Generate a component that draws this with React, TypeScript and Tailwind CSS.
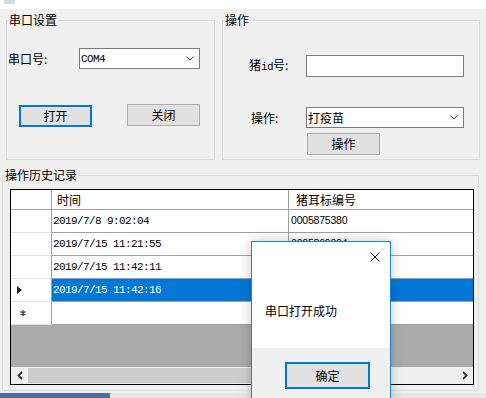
const cjk = "font-['Noto_Sans_CJK_SC','Microsoft_YaHei',sans-serif]";
const mono = "font-['Liberation_Mono',monospace]";

const Chevron = () => (
  <svg width="8" height="5" viewBox="0 0 8 5" className="shrink-0">
    <polyline points="0.5,0.5 4,4 7.5,0.5" fill="none" stroke="#444" strokeWidth="1" />
  </svg>
);

const Legend = ({ text }: { text: string }) => (
  <span className={`${cjk} absolute -top-[7px] left-[1px] bg-[#f0f0f0] px-[1px] text-[12px] leading-[12px] text-black`}>
    {text}
  </span>
);

const WinButton = ({ label, focused, className }: { label: string; focused?: boolean; className?: string }) => (
  <div
    className={`${cjk} flex w-[73px] h-[22px] items-center justify-center bg-[#e1e1e1] text-[12px] leading-[12px] text-black ${
      focused ? 'border-2 border-[#0078d7]' : 'border border-[#adadad]'
    } ${className ?? ''}`}
  >
    {label}
  </div>
);

const rows = [
  { time: '2019/7/8 9:02:04', tag: '0005875380' },
  { time: '2019/7/15 11:21:55', tag: '0005869004' },
  { time: '2019/7/15 11:42:11', tag: '0005869012' },
  { time: '2019/7/15 11:42:16', tag: '0005869013', selected: true },
];

const App = () => {
  return (
    <div className="relative w-[486px] h-[398px] overflow-hidden bg-[#f0f0f0] flex flex-col">
      {/* strip of the window above */}
      <div className="h-[9px] bg-white flex shrink-0">
        <div className="ml-[4px] w-[11px] h-[4px] bg-[#d9d9d9]" />
      </div>

      {/* top group boxes */}
      <div className="flex mt-[11px] shrink-0">
        <div className="relative ml-[6px] w-[209px] h-[140px] border border-[#dcdcdc]">
          <Legend text="串口设置" />
          <div className="flex items-center mt-[27px]">
            <span className={`${cjk} ml-[1px] w-[71px] text-[12px] leading-[12px]`}>串口号:</span>
            <div className="flex w-[121px] h-[21px] items-center justify-between bg-white border border-[#7a7a7a] pl-[1px] pr-[5px]">
              <span className={`${mono} text-[11px] tracking-[-0.6px] leading-[12px]`}>COM4</span>
              <Chevron />
            </div>
          </div>
          <div className="flex mt-[35px]">
            <WinButton label="打开" focused className="ml-[12px] mt-[1px]" />
            <WinButton label="关闭" className="ml-[35px]" />
          </div>
        </div>

        <div className="relative ml-[7px] w-[258px] h-[140px] border border-[#dcdcdc]">
          <Legend text="操作" />
          <div className="flex items-center mt-[34px]">
            <span className={`${cjk} ml-[26px] w-[57px] text-[12px] leading-[12px]`}>
              猪<span className={`${mono} text-[11px] tracking-[-0.6px]`}>id</span>号:
            </span>
            <div className="w-[158px] h-[22px] bg-white border border-[#7a7a7a]" />
          </div>
          <div className="flex items-center mt-[30px]">
            <span className={`${cjk} ml-[28px] w-[55px] text-[12px] leading-[12px]`}>操作:</span>
            <div className="flex w-[158px] h-[21px] items-center justify-between bg-white border border-[#7a7a7a] pl-[1px] pr-[5px]">
              <span className={`${cjk} text-[12px] leading-[12px]`}>打疫苗</span>
              <Chevron />
            </div>
          </div>
          <WinButton label="操作" className="ml-[84px] mt-[5px]" />
        </div>
      </div>

      {/* history group box */}
      <div className="relative ml-[2px] mt-[15px] w-[477px] h-[216px] border border-[#dcdcdc] shrink-0">
        <Legend text="操作历史记录" />
        <div className="ml-[7px] mt-[13px] w-[464px] h-[196px] border border-black flex flex-col bg-[#ababab]">
          {/* header */}
          <div className="flex h-[20px] bg-white border-b border-[#a0a0a0] shrink-0">
            <div className="w-[41px] border-r border-[#a0a0a0]" />
            <div className={`${cjk} w-[237px] pl-[5px] border-r border-[#a0a0a0] text-[12px] leading-[19px]`}>时间</div>
            <div className={`${cjk} flex-1 pl-[7px] text-[12px] leading-[19px]`}>猪耳标编号</div>
          </div>
          {rows.map((r) => (
            <div key={r.time} className="flex h-[23px] bg-white shrink-0">
              <div className="w-[41px] flex items-center pl-[6px] border-r border-[#a0a0a0] border-b border-b-[#e3e3e3]">
                {r.selected && (
                  <svg width="5" height="8" viewBox="0 0 5 8">
                    <polygon points="0,0 5,4 0,8" fill="#222" />
                  </svg>
                )}
              </div>
              <div
                className={`${mono} w-[237px] flex items-center pl-[1px] text-[11px] tracking-[-0.6px] border-r border-b border-[#a0a0a0] ${
                  r.selected ? 'bg-[#0078d7] text-white' : 'text-black'
                }`}
              >
                {r.time}
              </div>
              <div
                className={`font-['Liberation_Sans',sans-serif] flex-1 flex items-center pl-[2px] text-[10.5px] tracking-[-0.2px] border-b border-[#a0a0a0] ${
                  r.selected ? 'bg-[#0078d7] text-white' : 'text-black'
                }`}
              >
                {r.tag}
              </div>
            </div>
          ))}
          {/* new row */}
          <div className="flex h-[23px] bg-white shrink-0">
            <div className="w-[41px] flex items-center pl-[9px] border-r border-[#a0a0a0] border-b border-b-[#e3e3e3]">
              <svg width="6" height="6" viewBox="0 0 6 6">
                <path d="M3 0 V6 M0.4 1.5 L5.6 4.5 M0.4 4.5 L5.6 1.5" stroke="#444" strokeWidth="1.4" />
              </svg>
            </div>
            <div className="w-[237px] border-r border-b border-[#a0a0a0]" />
            <div className="flex-1 border-b border-[#a0a0a0]" />
          </div>
          <div className="flex-1" />
          {/* horizontal scrollbar */}
          <div className="flex h-[17px] bg-[#f0f0f0] shrink-0">
            <div className="w-[17px] flex items-center justify-center">
              <svg width="6" height="9" viewBox="0 0 6 9">
                <polyline points="5,1 1.5,4.5 5,8" fill="none" stroke="#333" strokeWidth="1.8" />
              </svg>
            </div>
            <div className="w-[300px] my-[1px] bg-[#cdcdcd]" />
            <div className="flex-1" />
            <div className="w-[17px] flex items-center justify-center">
              <svg width="6" height="9" viewBox="0 0 6 9">
                <polyline points="1,1 4.5,4.5 1,8" fill="none" stroke="#333" strokeWidth="1.8" />
              </svg>
            </div>
          </div>
        </div>
      </div>

      {/* desktop below the window */}
      <div className="flex mt-[2px] flex-1">
        <div className="w-[110px] bg-[#4d6e9c]" />
        <div className="flex-1 bg-[#e6e6e6]" />
      </div>

      {/* message box */}
      <div className="absolute left-[251px] top-[241px] w-[140px] h-[170px] border border-[#1883d7] bg-[#f0f0f0] flex flex-col shadow-[0_0_12px_rgba(0,0,0,0.22)]">
        <div className="h-[106px] bg-white flex flex-col">
          <div className="flex justify-end pt-[10px] pr-[10px]">
            <svg width="10" height="10" viewBox="0 0 10 10">
              <path d="M0.5 0.5 L9.5 9.5 M9.5 0.5 L0.5 9.5" stroke="#111" strokeWidth="1" />
            </svg>
          </div>
          <div className={`${cjk} mt-[41px] pl-[13px] text-[12px] leading-[16px] text-black`}>串口打开成功</div>
        </div>
        <div className="pt-[14px] pl-[33px]">
          <div className={`${cjk} flex w-[85px] h-[27px] items-center justify-center bg-[#e1e1e1] border-2 border-[#0078d7] text-[12px] text-black`}>
            确定
          </div>
        </div>
      </div>
    </div>
  );
};

export default App;
